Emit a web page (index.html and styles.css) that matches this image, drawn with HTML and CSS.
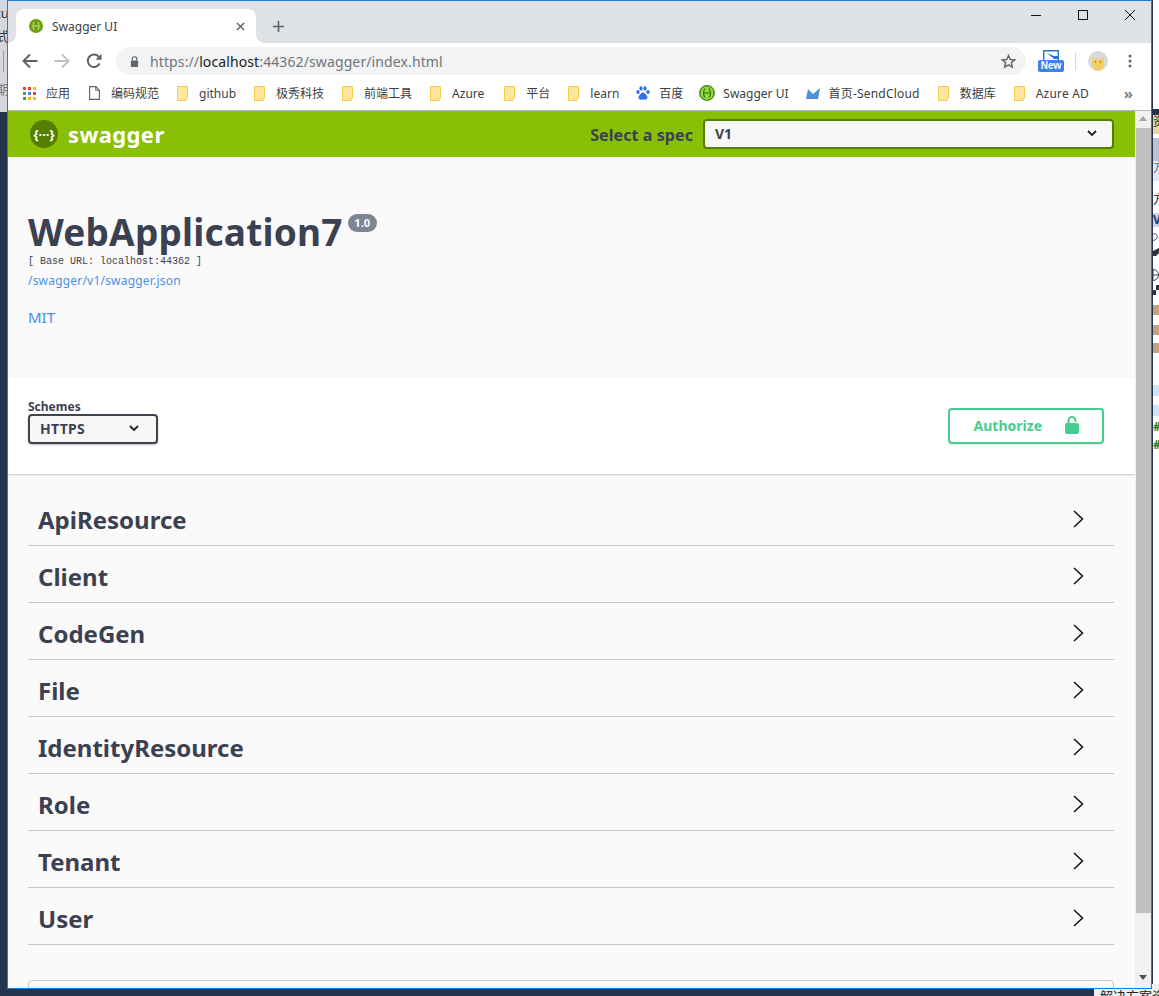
FILE: index.html
```html
<!DOCTYPE html>
<html>
<head>
	<title>Swagger UI</title>
	<meta charset="utf-8" />
	<link rel="stylesheet" href="styles.css">
</head>
<body>
	<div class="desk-left">
		<span class="desk-t1">tu</span>
		<span class="desk-t2">式</span>
		<span class="desk-bar"></span>
		<span class="desk-t3">期</span>
	</div>
	<div class="desk-right">
		<span class="dr dr-a"></span>
		<span class="dr dr-b">资</span>
		<span class="dr dr-c"></span>
		<span class="dr dr-d">方</span>
		<span class="dr dr-e">方</span>
		<span class="dr dr-f">V</span>
		<svg class="dr-g" viewBox="0 0 6 68"><path d="M0 2c3-1 5 1 4 4-1 2-3 2-4 3" fill="none" stroke="#555"/><path d="M0 19l6-3v5l-3 3H0z" fill="#333"/><circle cx="0" cy="43" r="5.500" fill="none" stroke="#444"/><path d="M0 43h6M0 38v10" stroke="#444"/><rect y="58" width="3" height="5" fill="#333"/><rect x="3" y="53" width="3" height="5" fill="#333"/></svg>
		<span class="dr dr-h dr-h1"></span>
		<span class="dr dr-h dr-h2"></span>
		<span class="dr dr-h dr-h3"></span>
		<span class="dr dr-i dr-i1"></span>
		<span class="dr dr-i"></span>
		<span class="dr dr-j">#</span>
		<span class="dr dr-j">#</span>
	</div>
	<div class="desk-bottom">解决方案资</div>

	<div class="window">
		<div class="tabstrip">
			<div class="tab">
				<svg class="favicon" viewBox="0 0 16 16"><circle cx="8" cy="8" r="8" fill="#6d9f0c"/><path d="M6 3.500c-2 2.500-2 6.500 0 9M10 3.500c2 2.500 2 6.500 0 9M5 8h6" stroke="#cfe49a" stroke-width="1.200" fill="none"/></svg>
				<span class="tab-title">Swagger UI</span>
				<svg class="tab-close" viewBox="0 0 10 10"><path d="M1 1l8 8M9 1l-8 8" stroke="#5f6368" stroke-width="1.600"/></svg>
			</div>
			<svg class="tab-new" viewBox="0 0 14 14"><path d="M7 1v12M1 7h12" stroke="#5f6368" stroke-width="1.700"/></svg>
			<div class="win-controls">
				<svg class="win-min" viewBox="0 0 10 10"><path d="M0 5.500h10" stroke="#111" stroke-width="1"/></svg>
				<svg class="win-max" viewBox="0 0 10 10"><rect x=".5" y=".5" width="9" height="9" fill="none" stroke="#111"/></svg>
				<svg class="win-close" viewBox="0 0 10 10"><path d="M0 0l10 10M10 0L0 10" stroke="#111" stroke-width="1"/></svg>
			</div>
		</div>

		<div class="toolbar">
			<svg class="nav-btn" viewBox="0 0 16 16"><path d="M15.500 8H2M8 1.500L1.500 8 8 14.500" fill="none" stroke="#5f6368" stroke-width="2"/></svg>
			<svg class="nav-btn" viewBox="0 0 16 16"><path d="M.5 8H14M8 1.500L14.500 8 8 14.500" fill="none" stroke="#bdc1c6" stroke-width="2"/></svg>
			<svg class="nav-btn" viewBox="0 0 16 16"><path d="M13.600 10.500A6.200 6.200 0 1 1 12.600 3.600L14.500 5.500" fill="none" stroke="#5f6368" stroke-width="2"/><path d="M15.500 .8v6h-6z" fill="#5f6368"/></svg>
			<div class="omnibox">
				<svg class="lock" viewBox="0 0 10 12"><path d="M2.500 5V3.200a2.500 2.500 0 0 1 5 0V5" fill="none" stroke="#5f6368" stroke-width="1.300"/><rect x="1" y="5" width="8" height="7" rx="1" fill="#5f6368"/></svg>
				<span class="url">https://<b>localhost</b>:44362/swagger/index.html</span>
				<svg class="star" viewBox="0 0 16 16"><path d="M8 1.600l1.900 4.300 4.700.4-3.600 3.100 1.100 4.600L8 11.600 3.900 14l1.100-4.600-3.600-3.100 4.700-.4z" fill="none" stroke="#5f6368" stroke-width="1.500"/></svg>
			</div>
			<div class="ext-new">
				<svg class="ext-top" viewBox="0 0 16 10"><path d="M.7 10V.7h14.600V10" fill="none" stroke="#2a74c9" stroke-width="1.400"/><path d="M4 3l7 3 4 0v3H11z" fill="#2a74c9"/></svg>
				<span class="ext-label">New</span>
			</div>
			<span class="tool-sep"></span>
			<svg class="avatar" viewBox="0 0 20 20"><circle cx="10" cy="10" r="10" fill="#d9d9d9"/><path d="M4.500 5.500l2.500 3h6l2.500-3 .5 9-3 5H7l-3-5z" fill="#f6cd63"/><circle cx="7.500" cy="11" r=".8" fill="#8a6a1d"/><circle cx="12.500" cy="11" r=".8" fill="#8a6a1d"/></svg>
			<svg class="dots" viewBox="0 0 4 14"><circle cx="2" cy="2" r="1.500" fill="#5f6368"/><circle cx="2" cy="7" r="1.500" fill="#5f6368"/><circle cx="2" cy="12" r="1.500" fill="#5f6368"/></svg>
		</div>

		<div class="bookmarks">
			<a class="bm bm-first"><svg class="bm-apps" viewBox="0 0 13 13"><rect width="3" height="3" fill="#ea4335"/><rect x="5" width="3" height="3" fill="#ea4335"/><rect x="10" width="3" height="3" fill="#fbbc04"/><rect y="5" width="3" height="3" fill="#34a853"/><rect x="5" y="5" width="3" height="3" fill="#4285f4"/><rect x="10" y="5" width="3" height="3" fill="#ea4335"/><rect y="10" width="3" height="3" fill="#34a853"/><rect x="5" y="10" width="3" height="3" fill="#fbbc04"/><rect x="10" y="10" width="3" height="3" fill="#fbbc04"/></svg>应用</a>
			<a class="bm"><svg class="bm-page" viewBox="0 0 11 14"><path d="M.6.6h6.200l3.600 3.600v9.200H.6zM6.800.6v3.600h3.600" fill="#fff" stroke="#5f6368" stroke-width="1.100"/></svg>编码规范</a>
			<a class="bm"><svg class="bm-folder" viewBox="0 0 11 15"><path d="M.5.5h10v11.500H9V14.500H.5z" fill="#ffe79b" stroke="#f2c94f"/></svg>github</a>
			<a class="bm"><svg class="bm-folder" viewBox="0 0 11 15"><path d="M.5.5h10v11.500H9V14.500H.5z" fill="#ffe79b" stroke="#f2c94f"/></svg>极秀科技</a>
			<a class="bm"><svg class="bm-folder" viewBox="0 0 11 15"><path d="M.5.5h10v11.500H9V14.500H.5z" fill="#ffe79b" stroke="#f2c94f"/></svg>前端工具</a>
			<a class="bm bm-wide"><svg class="bm-folder" viewBox="0 0 11 15"><path d="M.5.5h10v11.500H9V14.500H.5z" fill="#ffe79b" stroke="#f2c94f"/></svg>Azure</a>
			<a class="bm"><svg class="bm-folder" viewBox="0 0 11 15"><path d="M.5.5h10v11.500H9V14.500H.5z" fill="#ffe79b" stroke="#f2c94f"/></svg>平台</a>
			<a class="bm bm-learn"><svg class="bm-folder" viewBox="0 0 11 15"><path d="M.5.5h10v11.500H9V14.500H.5z" fill="#ffe79b" stroke="#f2c94f"/></svg>learn</a>
			<a class="bm bm-tight"><svg class="bm-paw" viewBox="0 0 14 14"><ellipse cx="2" cy="6" rx="1.700" ry="2.100" fill="#2f72e0"/><ellipse cx="5" cy="2.400" rx="1.600" ry="2.200" fill="#2f72e0"/><ellipse cx="9" cy="2.400" rx="1.600" ry="2.200" fill="#2f72e0"/><ellipse cx="12" cy="6" rx="1.700" ry="2.100" fill="#2f72e0"/><path d="M7 6.500c-2 0-2.500 2-4 3.300C1.800 11.500 3 14 5 13.700c1.400-.2 2.600-.2 4 0 2 .3 3.200-2.200 2-3.900-1.500-1.300-2-3.300-4-3.300z" fill="#2f72e0"/></svg>百度</a>
			<a class="bm bm-swagger"><svg class="bm-swag" viewBox="0 0 16 16"><circle cx="8" cy="8" r="7.300" fill="#8edb3c" stroke="#3f7d1a" stroke-width="1.300"/><path d="M6 3.500c-2 2.500-2 6.500 0 9M10 3.500c2 2.500 2 6.500 0 9M5 8h6" stroke="#2f6a10" stroke-width="1.100" fill="none"/></svg>Swagger UI</a>
			<a class="bm bm-spaced"><svg class="bm-cloud" viewBox="0 0 14 11"><path d="M0 11L2 1l5 5 7-6-2 11z" fill="#4d90d9"/></svg>首页-SendCloud</a>
			<a class="bm"><svg class="bm-folder" viewBox="0 0 11 15"><path d="M.5.5h10v11.500H9V14.500H.5z" fill="#ffe79b" stroke="#f2c94f"/></svg>数据库</a>
			<a class="bm bm-spaced"><svg class="bm-folder" viewBox="0 0 11 15"><path d="M.5.5h10v11.500H9V14.500H.5z" fill="#ffe79b" stroke="#f2c94f"/></svg>Azure AD</a>
			<span class="bm-more">»</span>
		</div>

		<div class="viewport">
			<div class="page">
				<div class="topbar">
					<svg class="logo" viewBox="0 0 28 28"><circle cx="14" cy="14" r="14" fill="#547f00"/></svg>
					<span class="logo-glyph">{···}</span>
					<span class="logo-text">swagger</span>
					<label class="spec-label">Select a spec</label>
					<div class="spec-select">
						<span>V1</span>
						<svg class="chev" viewBox="0 0 10 7"><path d="M1 1l4 4 4-4" fill="none" stroke="#222" stroke-width="1.800"/></svg>
					</div>
				</div>

				<div class="info">
					<h2 class="title">WebApplication7<span class="version">1.0</span></h2>
					<div class="base-url">[ Base URL: localhost:44362 ]</div>
					<a class="spec-link">/swagger/v1/swagger.json</a>
					<a class="license">MIT</a>
				</div>

				<div class="schemes">
					<div>
						<div class="schemes-label">Schemes</div>
						<div class="schemes-select">
							<span>HTTPS</span>
							<svg class="chev" viewBox="0 0 10 7"><path d="M1 1l4 4 4-4" fill="none" stroke="#222" stroke-width="1.800"/></svg>
						</div>
					</div>
					<button class="authorize">
						<span>Authorize</span>
						<svg class="auth-lock" viewBox="0 0 14 18"><path d="M3.500 8V4.500a3.500 3.500 0 0 1 7 0V6" fill="none" stroke="#49cc90" stroke-width="2"/><rect y="7" width="14" height="11" rx="2" fill="#49cc90"/></svg>
					</button>
				</div>

				<div class="tags">
					<div class="tag"><span>ApiResource</span><svg class="tag-arrow" viewBox="0 0 11 18"><path d="M1 1l8.500 8L1 17" fill="none" stroke="#111" stroke-width="1.500"/></svg></div>
					<div class="tag"><span>Client</span><svg class="tag-arrow" viewBox="0 0 11 18"><path d="M1 1l8.500 8L1 17" fill="none" stroke="#111" stroke-width="1.500"/></svg></div>
					<div class="tag"><span>CodeGen</span><svg class="tag-arrow" viewBox="0 0 11 18"><path d="M1 1l8.500 8L1 17" fill="none" stroke="#111" stroke-width="1.500"/></svg></div>
					<div class="tag"><span>File</span><svg class="tag-arrow" viewBox="0 0 11 18"><path d="M1 1l8.500 8L1 17" fill="none" stroke="#111" stroke-width="1.500"/></svg></div>
					<div class="tag"><span>IdentityResource</span><svg class="tag-arrow" viewBox="0 0 11 18"><path d="M1 1l8.500 8L1 17" fill="none" stroke="#111" stroke-width="1.500"/></svg></div>
					<div class="tag"><span>Role</span><svg class="tag-arrow" viewBox="0 0 11 18"><path d="M1 1l8.500 8L1 17" fill="none" stroke="#111" stroke-width="1.500"/></svg></div>
					<div class="tag"><span>Tenant</span><svg class="tag-arrow" viewBox="0 0 11 18"><path d="M1 1l8.500 8L1 17" fill="none" stroke="#111" stroke-width="1.500"/></svg></div>
					<div class="tag"><span>User</span><svg class="tag-arrow" viewBox="0 0 11 18"><path d="M1 1l8.500 8L1 17" fill="none" stroke="#111" stroke-width="1.500"/></svg></div>
					<div class="models"></div>
				</div>
			</div>
			<div class="scrollbar">
				<span class="sb-up"></span>
				<span class="sb-thumb"></span>
				<span class="sb-down"></span>
			</div>
		</div>
	</div>
</body>
</html>
```
FILE: styles.css
```css
html, body {margin: 0;padding: 0;height: 100%;overflow: hidden;}
body {position: relative;width: 1159px;height: 996px;background: #24344f;font-family: "Noto Sans", "Noto Sans CJK SC", sans-serif;}
svg {display: block;flex: none;}

/* desktop showing round the window */
.desk-left {position: absolute;left: 0;top: 0;width: 7px;height: 112px;background: #d5d7dd;overflow: hidden;font-size: 13px;color: #333;}
.desk-left span {position: absolute;left: -4px;line-height: 14px;}
.desk-t1 {top: 6px;}
.desk-t2 {top: 29px;}
.desk-bar {left: 3px !important;top: 50px;width: 1px;height: 22px;background: #9a9a9a;}
.desk-t3 {top: 82px;color: #777;}
.desk-right {position: absolute;left: 1153px;top: 0;width: 6px;height: 989px;background: #fff;overflow: hidden;font-size: 12px;line-height: 14px;color: #222;padding-top: 109px;box-sizing: border-box;display: flex;flex-direction: column;}
.dr {display: block;flex: none;overflow: hidden;}
.dr-a {height: 6px;background: #24344f;}
.dr-b {height: 19px;background: #e8d898;}
.dr-c {height: 23px;background: #b9c2d4;margin-top: 4px;}
.dr-d {height: 20px;background: #e4e8ef;color: #5a6a80;}
.dr-e {height: 14px;margin-top: 12px;}
.dr-f {height: 14px;margin-top: 6px;background: #c9d3e6;color: #123a78;font-weight: 700;}
.dr-g {width: 6px;height: 68px;margin-top: 5px;}
.dr-h {height: 10px;background: #c2a679;}
.dr-h1 {margin-top: 5px;}
.dr-h2 {margin-top: 10px;}
.dr-h3 {margin-top: 8px;}
.dr-i {height: 11px;margin-top: 9px;background: #cfe5f6;}
.dr-i1 {margin-top: 32px;}
.dr-j {height: 14px;margin-top: 4px;color: #1f7a1f;font-weight: 700;}
.desk-bottom {position: absolute;left: 1094px;top: 984px;width: 65px;height: 12px;overflow: hidden;background: #eee;font-size: 13px;line-height: 24px;color: #222;white-space: nowrap;padding-left: 6px;box-sizing: border-box;}

/* browser window */
.window {position: absolute;left: 7px;top: 0;width: 1145px;height: 989px;box-sizing: border-box;border: 1px solid #1a7fd6;background: #fff;display: flex;flex-direction: column;overflow: hidden;}
.tabstrip {height: 42px;flex: none;background: #dee1e6;display: flex;align-items: flex-end;position: relative;}
.tab {position: relative;margin-left: 8px;width: 240px;height: 34px;box-sizing: border-box;background: #fff;border-radius: 8px 8px 0 0;display: flex;align-items: center;padding: 0 11px 0 13px;}
.tab::before, .tab::after {content: "";position: absolute;bottom: 0;width: 8px;height: 8px;}
.tab::before {left: -8px;background: radial-gradient(circle at 0 0, #dee1e6 7.500px, #fff 8px);}
.tab::after {right: -8px;background: radial-gradient(circle at 100% 0, #dee1e6 7.500px, #fff 8px);}
.favicon {width: 14px;height: 14px;}
.tab-title {margin-left: 9px;font-size: 12px;color: #3c4043;flex: 1;}
.tab-close {width: 9px;height: 9px;}
.tab-new {width: 13px;height: 13px;margin: 0 0 10px 16px;}
.win-controls {margin-left: auto;align-self: flex-start;display: flex;align-items: center;padding: 9px 16px 0 0;}
.win-min, .win-max, .win-close {width: 10px;height: 10px;}
.win-min {margin-right: 37px;}
.win-max {margin-right: 37px;}

.toolbar {height: 32px;flex: none;box-sizing: border-box;display: flex;align-items: center;padding: 4px 0 0 14px;}
.nav-btn {width: 16px;height: 16px;margin-right: 16px;}
.omnibox {width: 910px;height: 28px;margin-left: -2px;box-sizing: border-box;background: #f1f3f4;border-radius: 14px;display: flex;align-items: center;padding: 0 10px 0 14px;}
.lock {width: 9px;height: 11px;}
.url {margin-left: 11px;font-size: 14px;letter-spacing: .11px;color: #70757a;flex: 1;white-space: nowrap;}
.url b {font-weight: 400;color: #202124;}
.star {width: 15px;height: 15px;}
.ext-new {width: 26px;margin-left: 12px;display: flex;flex-direction: column;align-items: center;}
.ext-top {width: 16px;height: 10px;}
.ext-label {width: 26px;height: 12px;background: #3b82ea;border-radius: 2px;color: #fff;font: 700 10px/12px "Liberation Sans", sans-serif;text-align: center;}
.tool-sep {width: 1px;height: 18px;background: #d5d7da;margin: 0 12px 0 11px;}
.avatar {width: 20px;height: 20px;}
.dots {width: 4px;height: 14px;margin-left: 20px;}

.bookmarks {height: 36px;flex: none;box-sizing: border-box;display: flex;align-items: center;padding: 1px 0 0 15px;border-bottom: 1px solid #b9babc;font-size: 12px;color: #3c4043;white-space: nowrap;}
.bm {display: flex;align-items: center;margin-right: 18px;}
.bm svg {margin-right: 11px;}
.bm-first {margin-right: 19px;}
.bm-wide {margin-right: 20px;}
.bm-learn {margin-right: 17px;}
.bm-tight {margin-right: 16px;}
.bm-swagger {margin-right: 17px;}
.bm-spaced {letter-spacing: .2px;}
.bm-apps {width: 13px;height: 13px;}
.bm svg.bm-apps {margin-right: 10px;}
.bm-page {width: 11px;height: 14px;}
.bm-folder {width: 11px;height: 15px;}
.bm-paw {width: 14px;height: 14px;}
.bm-swag {width: 16px;height: 16px;}
.bm svg.bm-paw, .bm svg.bm-cloud {margin-right: 9px;}
.bm svg.bm-swag {margin-right: 8px;}
.bm-cloud {width: 14px;height: 11px;}
.bm-more {margin-left: auto;margin-right: 18px;font-size: 15px;font-weight: 700;color: #7a7e83;}

/* page */
.viewport {flex: 1;display: flex;min-height: 0;}
.page {flex: 1;min-width: 0;background: #fafafa;color: #3b4151;overflow: hidden;}
.topbar {height: 46px;box-sizing: border-box;background: #89bf04;display: flex;align-items: center;padding: 0 21px 0 22px;position: relative;}
.logo {width: 28px;height: 28px;}
.logo-glyph {position: absolute;left: 22px;width: 28px;text-align: center;font-size: 13px;font-weight: 700;color: #fff;}
.logo-text {margin-left: 10px;font-size: 22px;letter-spacing: .4px;font-weight: 700;color: #fff;}
.spec-label {margin-left: auto;padding-top: 2px;font-size: 16px;letter-spacing: .08px;font-weight: 700;color: #3b4151;}
.spec-select {width: 411px;height: 30px;margin-left: 10px;box-sizing: border-box;border: 2px solid #547f00;border-radius: 4px;background: #f7f7f7;display: flex;align-items: center;justify-content: space-between;padding: 0 15px 2px 10px;font-size: 14px;font-weight: 700;}
.chev {width: 10px;height: 7px;}
.info {height: 221px;box-sizing: border-box;padding: 51px 20px 0;}
.title {margin: 0;font-size: 37px;line-height: 48px;letter-spacing: .2px;font-weight: 700;display: flex;align-items: flex-start;}
.version {margin: 6px 0 0 5px;width: 29px;height: 18px;background: #7d8492;border-radius: 9px;font-size: 11px;line-height: 18px;letter-spacing: 0;color: #fff;text-align: center;}
.base-url {font: 10px/12px "Liberation Mono", monospace;margin-top: 0;}
.spec-link {display: block;margin-top: 5px;font-size: 12px;line-height: 16px;letter-spacing: .2px;color: #4990e2;}
.license {display: block;margin-top: 19px;font-size: 15px;line-height: 19px;color: #4990e2;}
.schemes {height: 96px;box-sizing: border-box;background: #fff;box-shadow: 0 1px 2px rgba(0,0,0,.2);display: flex;justify-content: space-between;align-items: flex-start;padding: 20px 31px 0 20px;position: relative;}
.schemes-label {height: 16px;font-size: 12px;line-height: 18px;font-weight: 700;}
.schemes-select {width: 130px;height: 30px;box-sizing: border-box;border: 2px solid #41444e;border-radius: 4px;background: #f7f7f7;box-shadow: 0 1px 2px rgba(0,0,0,.25);display: flex;align-items: center;justify-content: space-between;padding: 0 17px 2px 10px;font-size: 14px;letter-spacing: .3px;font-weight: 700;}
.authorize {width: 156px;height: 36px;margin-top: 10px;box-sizing: border-box;border: 2px solid #49cc90;border-radius: 4px;background: transparent;box-shadow: 0 1px 2px rgba(0,0,0,.1);display: flex;align-items: center;justify-content: flex-end;padding: 0 23px 2px 0;font-family: inherit;font-size: 14px;font-weight: 700;color: #49cc90;}
.auth-lock {width: 14px;height: 18px;margin-left: 23px;}
.tags {padding: 15px 21px 0 20px;}
.tag {height: 57px;box-sizing: border-box;border-bottom: 1px solid #c4c5c8;display: flex;align-items: center;justify-content: space-between;padding: 4px 30px 0 10px;font-size: 24px;font-weight: 700;}
.tag-arrow {width: 11px;height: 18px;}
.models {height: 30px;margin-top: 35px;box-sizing: border-box;border: 1px solid #c4c5c8;border-radius: 4px;}
.scrollbar {width: 16px;flex: none;background: #f1f1f1;display: flex;flex-direction: column;align-items: center;}
.sb-up {margin-top: 5px;border: 4px solid transparent;border-top: 0;border-bottom: 5px solid #a3a3a3;}
.sb-thumb {width: 15px;height: 785px;margin-top: 7px;background: #c0c0c0;}
.sb-down {margin-top: 62px;border: 4px solid transparent;border-bottom: 0;border-top: 5px solid #505050;}
```
